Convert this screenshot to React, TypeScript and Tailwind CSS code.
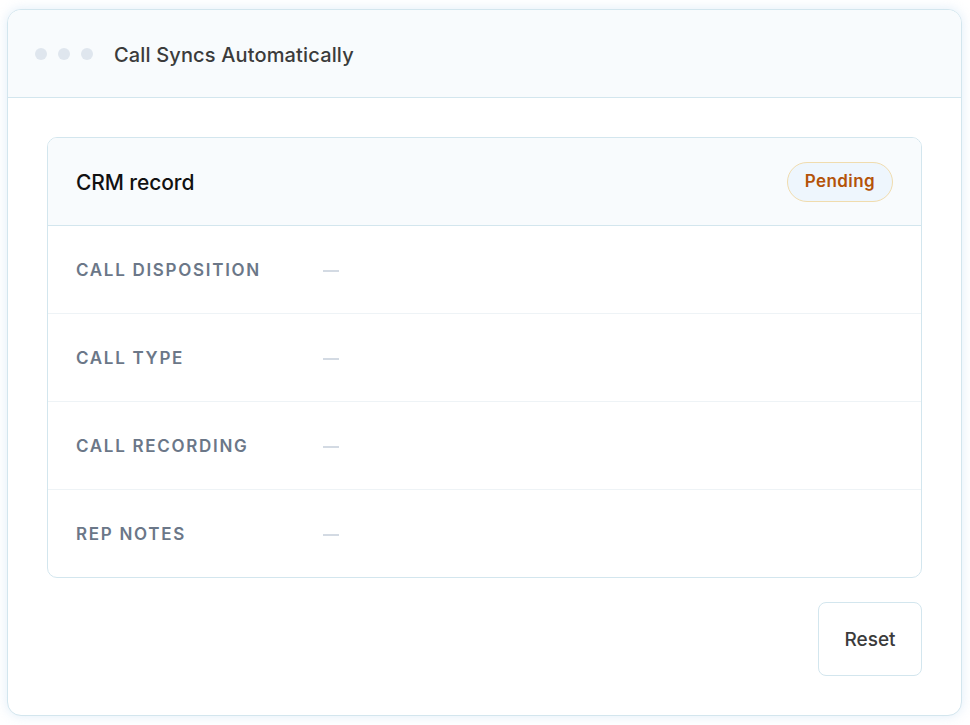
import React from 'react';

const fields = ['Call Disposition', 'Call Type', 'Call Recording', 'Rep Notes'];

const App = () => {
  return (
    <div
      className="w-[970px] h-[725px] bg-white pt-[9px] pl-[7px] pr-[8px]"
      style={{ fontFamily: 'Inter, "Noto Sans", sans-serif' }}
    >
      <div className="h-[707px] rounded-[14px] border border-[#d3e6ee] bg-white shadow-[0_0_12px_rgba(186,215,240,0.45)] flex flex-col overflow-hidden">
        <div className="h-[88px] shrink-0 bg-[#f8fbfd] border-b border-[#d3e6ee] flex items-center pl-[27px]">
          <div className="flex gap-[11px]">
            <span className="w-3 h-3 rounded-full bg-[#dfe6ee]" />
            <span className="w-3 h-3 rounded-full bg-[#dfe6ee]" />
            <span className="w-3 h-3 rounded-full bg-[#dfe6ee]" />
          </div>
          <h1 className="ml-[21px] mt-[2px] text-[20px] font-medium text-[#3b3b3b] tracking-[0.15px]">
            Call Syncs Automatically
          </h1>
        </div>

        <div className="flex-1 flex flex-col pl-[39px] pr-[39px] pt-[39px] pb-10">
          <div className="rounded-[10px] border border-[#d3e6ee] overflow-hidden">
            <div className="h-[88px] bg-[#f8fbfd] border-b border-[#d3e6ee] flex items-center justify-between pl-7 pr-7">
              <h2 className="text-[21px] pt-[2px] font-medium text-[#111111] tracking-[-0.1px]">CRM record</h2>
              <span className="h-10 px-[17px] rounded-full bg-[#eef6fd] border border-[#f0dcae] text-[#b45309] text-[17px] font-semibold tracking-[0.4px] flex items-center">
                Pending
              </span>
            </div>
            {fields.map((f, i) => (
              <div
                key={f}
                className={
                  i < fields.length - 1
                    ? 'h-[88px] flex items-center pl-7 pt-[3px] border-b border-[#eef3f6]'
                    : 'h-[87px] flex items-center pl-7 pt-[3px]'
                }
              >
                <span className="w-[247px] uppercase text-[17px] font-semibold tracking-[1.7px] text-[#6b7788]">
                  {f}
                </span>
                <span className="w-4 h-[2px] bg-[#d3dae3]" />
              </div>
            ))}
          </div>
          <div className="flex justify-end mt-6">
            <button className="w-[104px] h-[74px] pt-[3px] rounded-lg border border-[#d3e6ee] bg-white text-[19px] font-medium text-[#3b3b3b]">
              Reset
            </button>
          </div>
        </div>
      </div>
    </div>
  );
};

export default App;
